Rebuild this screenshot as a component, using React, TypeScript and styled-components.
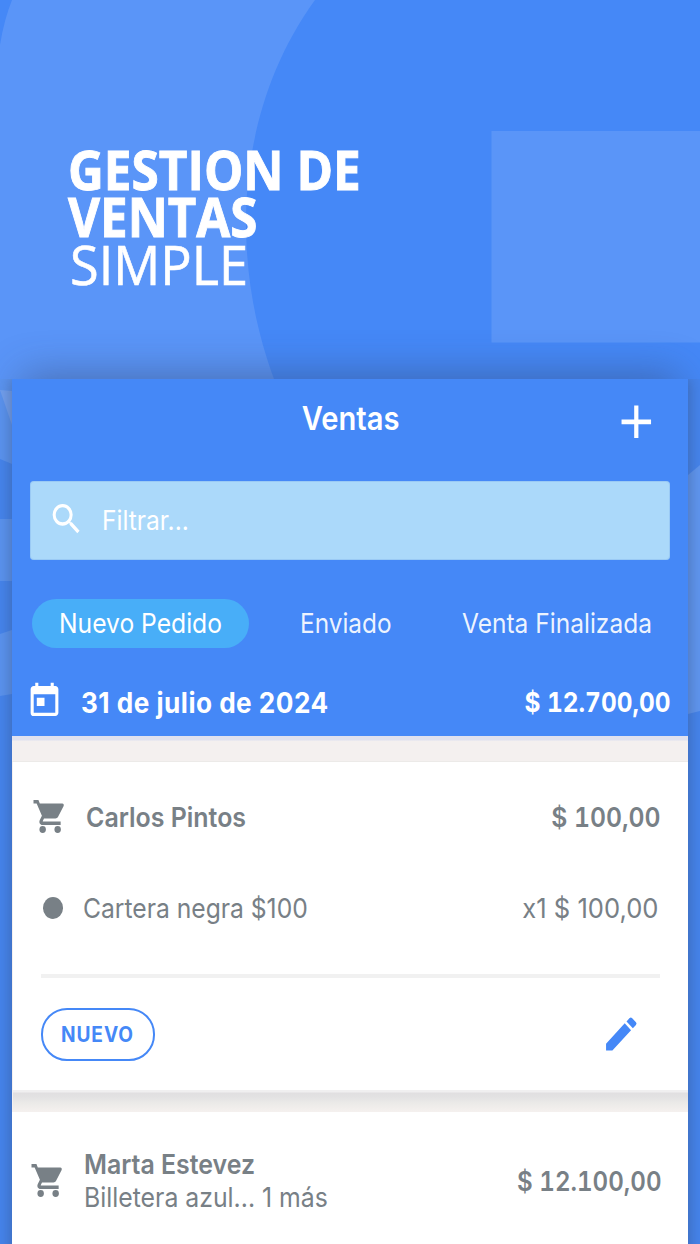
import React from "react";
import styled, { createGlobalStyle } from "styled-components";
import { MdAdd, MdEdit, MdSearch, MdToday } from "react-icons/md";

const blue = "#4588f7";
const grey = "#788086";

const GlobalStyle = createGlobalStyle`
  * { box-sizing: border-box; }
  body { margin: 0; background: ${blue}; font-family: Inter, "Liberation Sans", sans-serif; }
`;

const Page = styled.main`
  width: 700px;
  height: 1244px;
  overflow: hidden;
  display: flex;
  flex-direction: column;
`;

const Hero = styled.header`
  position: relative;
  height: 379px;
  padding: 146px 0 0 68px;
  overflow: hidden;
  &::after {
    content: "";
    position: absolute;
    left: 30px;
    right: 30px;
    top: 383px;
    height: 60px;
    box-shadow: 0 0 40px 8px rgba(50, 62, 90, 0.45);
  }
`;

const Backdrop = styled.svg`
  position: absolute;
  inset: 0;
  width: 100%;
  height: 100%;
`;

const Headline = styled.h1`
  position: relative;
  margin: 0;
  font: 700 54.6px/47.3px "Open Sans", "Noto Sans", sans-serif;
  color: #fff;
`;

const Line = styled.span<{ $squeeze: number; $light?: boolean }>`
  display: block;
  width: max-content;
  white-space: nowrap;
  margin-left: ${(p) => (p.$light ? 1.5 : 0)}px;
  font-weight: ${(p) => (p.$light ? 400 : 700)};
  -webkit-text-stroke: ${(p) => (p.$light ? 0.6 : 0.9)}px #fff;
  transform: scaleX(${(p) => p.$squeeze});
  transform-origin: left;
`;

const Stage = styled.section`
  position: relative;
  height: 865px;
  padding: 0 12px;
  overflow: hidden;
`;

const Panel = styled.div`
  position: relative;
  height: 900px;
  background: #f4f0ef;
  box-shadow: 0 0 14px 1px rgba(50, 62, 90, 0.42);
`;

const Top = styled.div`
  height: 357px;
  padding: 0 18px;
  background: ${blue};
  color: #fff;
`;

const TitleBar = styled.div`
  height: 102px;
  padding: 0 9px 24px;
  display: grid;
  grid-template-columns: 1fr auto 1fr;
  align-items: center;
`;

const Text = styled.span<{
  $size?: number;
  $weight?: number;
  $squeeze: number;
  $end?: boolean;
  $tabular?: boolean;
}>`
  display: block;
  width: max-content;
  line-height: 34px;
  white-space: nowrap;
  font-size: ${(p) => p.$size ?? 27.5}px;
  font-weight: ${(p) => p.$weight ?? 400};
  font-variant-numeric: ${(p) => (p.$tabular ? "tabular-nums" : "normal")};
  transform: scaleX(${(p) => p.$squeeze});
  transform-origin: ${(p) => (p.$end ? "right" : "left")};
`;

const Title = styled(Text)`
  grid-column: 2;
  margin: 1px 0 0 1px;
  transform-origin: center;
`;

const DateText = styled(Text)`
  margin-top: 1px;
  letter-spacing: 0.5px;
`;

const AddButton = styled.span`
  display: flex;
  justify-self: end;
  margin: 8px -1px 0 0;
`;

const SearchBox = styled.div`
  height: 79px;
  margin-top: -0.5px;
  padding-left: 17.5px;
  display: flex;
  align-items: center;
  gap: 17.5px;
  border-radius: 4px;
  background: #abd9fa;
  box-shadow: inset 0 0 0 1px rgba(115, 170, 235, 0.3);
  & > :first-child { margin-top: -3px; }
  & > :last-child { margin-top: 2px; }
`;

const Tabs = styled.nav`
  display: flex;
  height: 49px;
  margin: 39.5px 0 0 2px;
`;

const Tab = styled.div<{ $width: number; $pad: number; $active?: boolean }>`
  width: ${(p) => p.$width}px;
  padding: 6.5px 0 0 ${(p) => p.$pad}px;
  border-radius: 25px;
  color: ${(p) => (p.$active ? "#fff" : "rgba(255,255,255,.92)")};
  background: ${(p) => (p.$active ? "#48aef8" : "transparent")};
`;

const DateRow = styled.div`
  display: flex;
  align-items: center;
  height: 40px;
  margin-top: 34px;
  & > :last-child { margin: 0 -0.5px 0 auto; }
`;

const Strip = styled.div`
  height: 26px;
  border-bottom: 1px solid #eceae8;
  background: linear-gradient(#dfe1ef 4px, #f4f0ef 5px);
`;

const Card = styled.article`
  margin-left: 1px;
  height: 328px;
  padding: 0 28px;
  color: ${grey};
  background: #fff;
`;

const SaleHead = styled.div`
  display: flex;
  align-items: center;
  padding: 35px 0 0;
  margin-left: -9px;
  & > :last-child { margin: 0 -0.5px 0 auto; }
`;

const Item = styled.div`
  display: flex;
  align-items: center;
  height: 34px;
  margin: 55px 1.5px 0 1.5px;
  & > :last-child { margin-left: auto; }
`;

const Dot = styled.i`
  width: 20px;
  height: 21.5px;
  margin-right: 20.5px;
  border-radius: 50%;
  background: ${grey};
`;

const Divider = styled.hr`
  height: 4px;
  margin: 48.5px 0 30px;
  border: 0;
  background: #f1f1f1;
`;

const Actions = styled.div`
  display: flex;
  align-items: center;
  justify-content: space-between;
  padding-right: 18.5px;
`;

const Status = styled.div`
  width: 114px;
  height: 53.5px;
  padding: 8.5px 0 0 17.5px;
  border: 2px solid ${blue};
  border-radius: 26px;
  color: ${blue};
  letter-spacing: 1px;
`;

const Gap = styled.div`
  height: 22px;
  margin-left: 1px;
  background: linear-gradient(#f0eff0 0, #f0eff0 2px, #e1dfe1 3px, #e3e2e3 7px, #ebeae8 13px, #f4f0ee 21px);
`;

const NextCard = styled.article`
  display: flex;
  align-items: center;
  height: 180px;
  padding: 0 26px 43px 18px;
  color: ${grey};
  background: #fff;
  & > :last-child { margin-left: auto; }
`;

const Summary = styled.div`
  margin-left: -0.5px;
  & > :last-child { margin-top: -0.5px; }
`;

const IconBox = styled.span<{ $w: number; $h: number }>`
  display: flex;
  flex: none;
  & > svg {
    width: ${(p) => p.$w}px;
    height: ${(p) => p.$h}px;
  }
`;

const CartBox = styled(IconBox)`
  margin-right: 18px;
`;

const CalendarBox = styled(IconBox)`
  margin: -2px 18px 0 -4px;
`;

const HeroArt = () => (
  <Backdrop viewBox="0 0 700 379">
    <rect width="700" height="379" fill={blue} />
    <path
      d="M12 0H315C265 69 246 150 246 222C246 284 258 335 274 379H0V45Q4 20 12 0Z"
      fill="#5a95f8"
    />
    <rect x="491.5" y="131" width="209" height="211.5" fill="#5a95f8" />
  </Backdrop>
);

const StageArt = () => (
  <Backdrop viewBox="0 0 700 865">
    <rect width="700" height="865" fill="#4584ec" />
    <path d="M0 0H12V85L0 80ZM0 140H12V202H0ZM0 255L12 251V315L0 317Z" fill="#5a93ef" />
    <path d="M0 11L12 12V46Z" fill="#719fee" />
    <path d="M688 96L700 86V332L688 335Z" fill="#5f96f0" />
  </Backdrop>
);

const Cart = () => (
  <CartBox $w={36} $h={39}>
    <svg viewBox="0 0 24 24" preserveAspectRatio="none" fill={grey}>
      <circle cx="7.1" cy="20" r="2.15" />
      <circle cx="17.1" cy="20" r="2.15" />
      <path d="M1 1.9v2.1h2.1l3.5 7.6-1.4 2.5c-.8 1.5.2 3.1 1.8 3.1h12.1v-2.1H7.4c-.2 0-.3-.2-.2-.4l.8-1.5h7.6c.8 0 1.4-.4 1.8-1l3.7-6.7c.3-.7-.1-1.5-.9-1.5H5.2l-.9-2.1z" />
    </svg>
  </CartBox>
);

export default function App() {
  return (
    <Page>
      <GlobalStyle />
      <Hero>
        <HeroArt />
        <Headline>
          <Line $squeeze={0.907}>GESTION DE</Line>
          <Line $squeeze={0.903}>VENTAS</Line>
          <Line $squeeze={0.957} $light>SIMPLE</Line>
        </Headline>
      </Hero>
      <Stage>
        <StageArt />
        <Panel>
          <Top>
            <TitleBar>
              <Title $size={32} $weight={600} $squeeze={0.91}>Ventas</Title>
              <AddButton>
                <IconBox $w={50.6} $h={55.7}><MdAdd preserveAspectRatio="none" /></IconBox>
              </AddButton>
            </TitleBar>
            <SearchBox>
              <IconBox $w={37} $h={40}><MdSearch preserveAspectRatio="none" /></IconBox>
              <Text $size={27} $squeeze={0.91}>Filtrar...</Text>
            </SearchBox>
            <Tabs>
              <Tab $width={217} $pad={26.5} $active><Text $squeeze={0.896}>Nuevo Pedido</Text></Tab>
              <Tab $width={187} $pad={50.5}><Text $squeeze={0.887}>Enviado</Text></Tab>
              <Tab $width={230} $pad={25.5}><Text $squeeze={0.892}>Venta Finalizada</Text></Tab>
            </Tabs>
            <DateRow>
              <CalendarBox $w={37} $h={40}><MdToday preserveAspectRatio="none" /></CalendarBox>
              <DateText $size={28} $weight={700} $squeeze={0.935}>31 de julio de 2024</DateText>
              <Text $weight={700} $squeeze={0.888} $end $tabular>$ 12.700,00</Text>
            </DateRow>
          </Top>
          <Strip />
          <Card>
            <SaleHead>
              <Cart />
              <Text $weight={600} $squeeze={0.907}>Carlos Pintos</Text>
              <Text $weight={600} $squeeze={0.9} $end $tabular>$ 100,00</Text>
            </SaleHead>
            <Item>
              <Dot />
              <Text $squeeze={0.896}>Cartera negra $100</Text>
              <Text $squeeze={0.93} $end>x1 $ 100,00</Text>
            </Item>
            <Divider />
            <Actions>
              <Status><Text $size={21} $weight={700} $squeeze={0.91}>NUEVO</Text></Status>
              <IconBox $w={40.5} $h={44}><MdEdit color={blue} preserveAspectRatio="none" /></IconBox>
            </Actions>
          </Card>
          <Gap />
          <NextCard>
            <Cart />
            <Summary>
              <Text $weight={600} $squeeze={0.905}>Marta Estevez</Text>
              <Text $squeeze={0.902}>Billetera azul... 1 más</Text>
            </Summary>
            <Text $weight={600} $squeeze={0.878} $end $tabular>$ 12.100,00</Text>
          </NextCard>
        </Panel>
      </Stage>
    </Page>
  );
}
